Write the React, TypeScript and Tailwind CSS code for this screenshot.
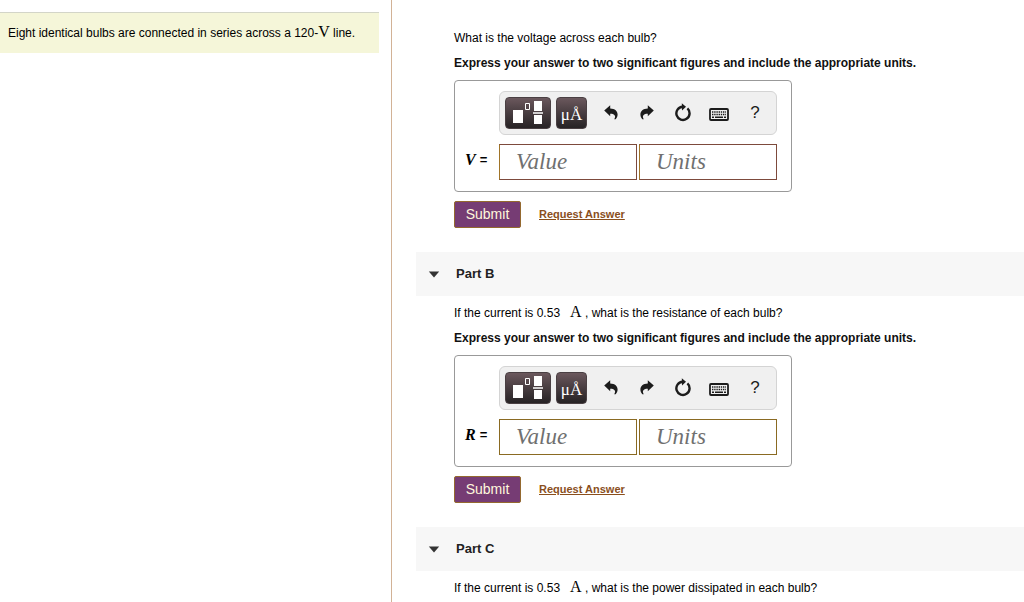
import React, { useState } from 'react';
import type { ReactNode } from 'react';

interface Part {
	id: string;
	title?: string;
	question: ReactNode;
	symbol?: string;
	borders?: string;
}

const Unit = ({ children }: { children: ReactNode }) => (
	<span className="font-['Liberation_Serif',serif] text-[16px] leading-none">{children}</span>
);

const parts: Part[] = [
	{
		id: 'a',
		question: 'What is the voltage across each bulb?',
		symbol: 'V',
		borders: 'border-[#7d4a3c] border-l-[#a07428]',
	},
	{
		id: 'b',
		title: 'Part B',
		question: (
			<>
				If the current is 0.53 &nbsp; <Unit>A</Unit> , what is the resistance of each bulb?
			</>
		),
		symbol: 'R',
		borders: 'border-[#8a6a22]',
	},
	{
		id: 'c',
		title: 'Part C',
		question: (
			<>
				If the current is 0.53 &nbsp; <Unit>A</Unit> , what is the power dissipated in each bulb?
			</>
		),
	},
];

export default function App() {
	return (
		<div className="flex min-h-screen bg-white font-['Liberation_Sans',Arial,sans-serif] text-[12px] text-black">
			<aside className="w-[392px] shrink-0 border-r border-[#d2b296] pt-3 pr-3">
				<p className="border-t border-[#d3d5c8] bg-[#f5f6d9] pl-2 leading-[40px] whitespace-nowrap">
					Eight identical bulbs are connected in series across a 120-<Unit>V</Unit> line.
				</p>
			</aside>
			<main className="min-w-0 flex-1 pl-6">
				{parts.map((part) => (
					<PartSection key={part.id} part={part} />
				))}
			</main>
		</div>
	);
}

function PartSection({ part }: { part: Part }) {
	const [open, setOpen] = useState(true);

	return (
		<section>
			{part.title && (
				<h2 className="bg-[#f7f7f7]">
					<button
						type="button"
						aria-expanded={open}
						onClick={() => setOpen(!open)}
						className="flex h-11 w-full items-center gap-4 pl-3 text-left text-[13px] font-bold text-[#222]"
					>
						<svg viewBox="0 0 12 7" className="h-[7px] w-3" aria-hidden="true">
							<path d="M.8.5h10.4L6 6.6z" fill="#333" />
						</svg>
						{part.title}
					</button>
				</h2>
			)}
			{open && (
				<div className={part.title ? 'pt-[5px] pl-[38px]' : 'pt-[26px] pl-[38px]'}>
					<p className="h-[25px] leading-[25px]">{part.question}</p>
					{part.symbol && <AnswerForm id={part.id} symbol={part.symbol} borders={part.borders} />}
				</div>
			)}
		</section>
	);
}

function AnswerForm({ id, symbol, borders }: { id: string; symbol: string; borders?: string }) {
	const field = `h-9 w-full min-w-0 border bg-white px-4 font-['Liberation_Serif',serif] text-[23px] italic outline-none placeholder:text-[#707070] ${borders}`;

	return (
		<form className="pb-6" onSubmit={(e) => e.preventDefault()}>
			<p className="leading-[25px] font-bold text-[#111]">
				Express your answer to two significant figures and include the appropriate units.
			</p>
			<div className="mt-1 grid w-[338px] max-w-full grid-cols-[44px_1fr] gap-y-[9px] rounded border border-[#999] pt-[10px] pr-[14px] pb-[11px]">
				<Toolbar />
				<label htmlFor={`value-${id}`} className="flex items-center gap-1 pb-1 pl-[10px] text-[13px] font-bold">
					<span className="font-['Liberation_Serif',serif] text-[16px] italic">{symbol}</span>=
				</label>
				<div className="grid grid-cols-2 gap-[2px]">
					<input id={`value-${id}`} type="text" placeholder="Value" className={field} />
					<input aria-label="Units" type="text" placeholder="Units" className={field} />
				</div>
			</div>
			<div className="mt-[9px] flex items-center gap-[18px]">
				<button
					type="submit"
					className="h-[27px] w-[67px] rounded-xs border border-[#94692f] bg-[#763c74] text-[14px] text-[#fff8dc]"
				>
					Submit
				</button>
				<a href="#request" className="text-[11px] font-bold text-[#8a4f1d] underline">
					Request Answer
				</a>
			</div>
		</form>
	);
}

const darkButton =
	'flex h-8 items-center justify-center rounded-[4px] border border-[#4a4043] bg-linear-to-b from-[#6b585d] to-[#272325] text-white';
const iconButton = 'flex h-8 w-9 items-center justify-center text-[#1c1c1c]';

function Toolbar() {
	return (
		<div className="col-start-2 flex h-11 items-center rounded-md border border-[#d4d4d4] bg-[#f0f0f0] pl-[5px]">
			<button type="button" aria-label="Templates" className={`${darkButton} w-[46px]`}>
				<svg viewBox="0 0 30 26" className="h-[26px] w-[30px]" fill="#fff" aria-hidden="true">
					<path d="M0 10h10v13H0zM21 1h8v10h-8zM21 15h8v9h-8zM20 12.300h10v1.400H20z" />
					<path d="M12.500 3.500h4v6h-4z" fill="none" stroke="#fff" />
				</svg>
			</button>
			<button
				type="button"
				aria-label="Symbols"
				className={`${darkButton} ml-[5px] mr-[6px] w-[31px] pt-1 font-['Liberation_Serif',serif] text-[17px]`}
			>
				μÅ
			</button>
			<button type="button" aria-label="Undo" className={iconButton}>
				<svg viewBox="0 0 14 16" className="h-4 w-[14px]" fill="currentColor" aria-hidden="true">
					<path d="M.2 5.600 6.200.2v3.200c4.800.1 7.400 2.800 7.400 6.200 0 1.700-.6 3.200-1.900 4.700h-1.500c.9-1.500 1.100-2.500.7-3.500-.6-1.500-2-2.100-4.700-2.100v2.600z" />
				</svg>
			</button>
			<button type="button" aria-label="Redo" className={iconButton}>
				<svg viewBox="0 0 14 16" className="h-4 w-[14px]" fill="currentColor" aria-hidden="true">
					<path d="M13.800 5.600 7.800.2v3.200C3 3.500.4 6.200.4 9.600c0 1.700.6 3.200 1.900 4.700h1.500c-.9-1.500-1.100-2.500-.7-3.500.6-1.500 2-2.100 4.700-2.100v2.600z" />
				</svg>
			</button>
			<button type="button" aria-label="Reset" className={iconButton}>
				<svg viewBox="0 0 16 20" className="h-5 w-4" aria-hidden="true">
					<path d="M12.400 5.400A6.600 6.600 0 1 1 7.600 3.700" fill="none" stroke="currentColor" strokeWidth="2.400" />
					<path d="M6.800.2 11 3.800 7 7.400z" fill="currentColor" />
				</svg>
			</button>
			<button type="button" aria-label="Keyboard shortcuts" className={iconButton}>
				<svg viewBox="0 0 20 13" className="mt-[2px] h-[13px] w-5" fill="none" stroke="currentColor" aria-hidden="true">
					<rect x="1" y="1" width="18" height="11" rx="1" strokeWidth="1.800" />
					<path d="M3 4h14M3 6.500h14" strokeWidth="1.400" strokeDasharray="1.400 .8" />
					<path d="M3 9.300h2M6 9.300h8M15 9.300h2" strokeWidth="1.400" />
				</svg>
			</button>
			<button type="button" aria-label="Help" className={`${iconButton} text-[17px]`}>
				?
			</button>
		</div>
	);
}
